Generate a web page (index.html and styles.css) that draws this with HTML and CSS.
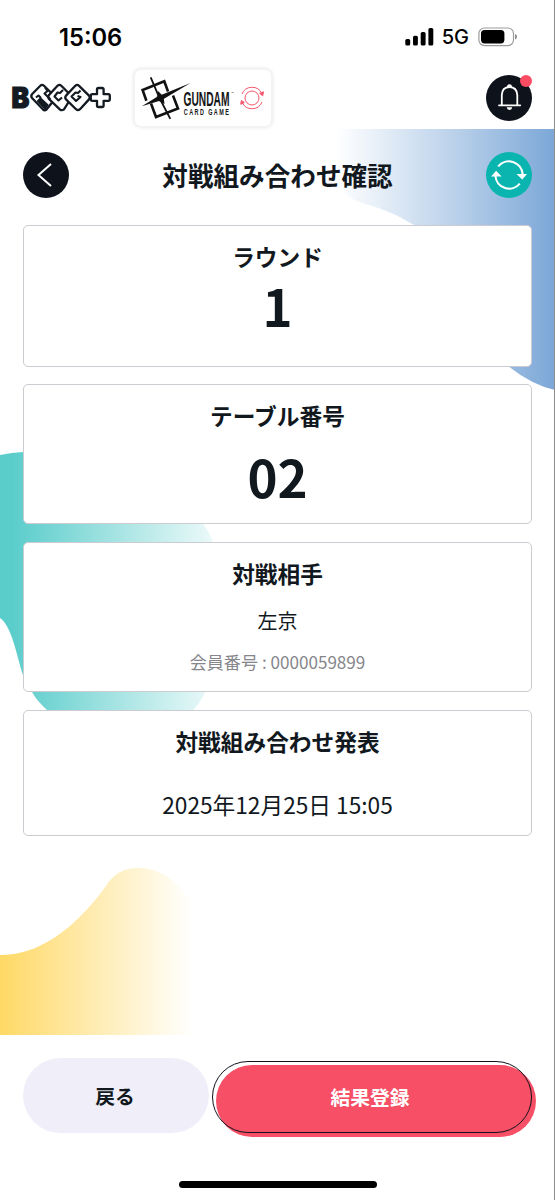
FILE: index.html
```html
<!DOCTYPE html>
<html lang="ja">
<head>
<meta charset="UTF-8" />
<meta name="viewport" content="width=device-width, initial-scale=1" />
<title>対戦組み合わせ確認</title>
<link rel="stylesheet" href="styles.css">
</head>
<body>

<div class="status-bar">
  <span class="time">15:06</span>
  <div class="status-icons">
    <svg class="signal" width="29" height="18" viewBox="0 0 29 18">
      <rect x="0.3" y="11" width="4.9" height="6.6" rx="1.6" />
      <rect x="8" y="7.7" width="4.9" height="9.9" rx="1.6" />
      <rect x="15.7" y="4" width="4.9" height="13.6" rx="1.6" />
      <rect x="23.4" y="0" width="4.9" height="17.6" rx="1.6" />
    </svg>
    <span class="network">5G</span>
    <svg class="battery" width="40" height="20" viewBox="0 0 40 20">
      <rect x="0.9" y="1" width="34.6" height="17.6" rx="5.5" fill="none" stroke="#9b9b9b" stroke-width="1.2" />
      <rect x="3" y="3" width="23.4" height="13.4" rx="3.6" />
      <path d="M37 7 Q39 7.8 39 9.8 Q39 11.8 37 12.6 Z" fill="#8a8a8a" />
    </svg>
  </div>
</div>

<header class="header">
  <svg class="brand-logo" width="104" height="38" viewBox="8 79 104 38">
    <text x="11.4" y="108" font-size="28.5" textLength="17.8" lengthAdjust="spacingAndGlyphs" class="brand-b">B</text>
    <g fill="#fff" stroke="#141a22" stroke-width="2.3" stroke-linejoin="round">
      <path d="M40.3 85.8 Q42 84 44 85.8 L56 97.5 L46.5 109.5 Q44.6 111 42.8 109.3 L32 98 Q30.5 95.8 32.2 94 Z" />
      <path d="M57.5 85.8 Q59.4 84 61.3 85.8 L72 96.5 L64 109.3 Q61.7 111 59.8 109.3 L49 99 Q47.5 97 49 95 Z" />
      <path d="M75.3 85.8 Q77.2 84 79.1 85.8 L89 95.6 Q90.5 97.5 89 99.4 L80 109.2 Q78 111 76 109.2 L66 99.4 Q64.5 97.5 66 95.6 Z" />
      <path d="M98.5 88 H102.1 Q103.6 88 103.6 89.5 V94.2 H108.3 Q109.8 94.2 109.8 95.7 V99.3 Q109.8 100.8 108.3 100.8 H103.6 V105.5 Q103.6 107 102.1 107 H98.5 Q97 107 97 105.5 V100.8 H92.3 Q90.8 100.8 90.8 99.3 V95.7 Q90.8 94.2 92.3 94.2 H97 V89.5 Q97 88 98.5 88 Z" />
    </g>
    <g fill="none" stroke="#141a22" stroke-width="2.1" stroke-linejoin="round">
      <path d="M38 101 L40.5 98.5 L47.5 105 L45 108.5 Z" fill="#141a22" />
      <path d="M36 97.5 L38.5 95.5 L41 98" />
      <path d="M45 87.5 L47.5 91 L44.5 93.5 L50.5 99.5" />
      <path d="M63 90 L60 93 L57.5 92.5 L54.5 96.5 L58.5 100.5 L62 97.5" />
      <path d="M80.5 90.5 L78 93 L75.5 92.5 L71.5 96.5 L76 101 L80.5 97 L77.5 96" />
    </g>
  </svg>

  <div class="game-card">
    <svg width="136" height="56" viewBox="135 70 136 56">
      <g fill="none" stroke="#111" stroke-width="2.6">
        <path d="M146.4 100.8 L142.6 90 L164.3 81.3 L168 91.5" />
        <path d="M151 103.5 L156 117 L178 108.5 L173 95.5" />
        <path d="M150.7 77.3 L159.5 98 L170.3 118.8" stroke-width="1.8" />
      </g>
      <path d="M141.8 106.3 L158 96.2 L190.5 83 L161.5 100.2 Z" fill="#111" />
      <path d="M158 91 L163.5 96.5 L164.5 104 L157 100 Z" fill="#111" />
      <text class="gundam" x="183.5" y="105.9" font-size="19.5" textLength="46" lengthAdjust="spacingAndGlyphs">GUNDAM</text>
      <text class="card-game" transform="translate(183.8 114.9) scale(0.62 1)">CARD GAME</text>
      <text class="tm" x="231" y="93.6">™</text>
      <g fill="none" stroke="#f4566c" stroke-width="1">
        <circle cx="252" cy="98" r="7" />
        <path d="M242 94 A10.8 10.8 0 0 1 261.8 93.5" />
        <path d="M262 102 A10.8 10.8 0 0 1 242.2 102.5" />
        <path d="M259.7 93.5 L263.5 91.8 L262.7 95.8 Z M244.3 102.5 L240.7 104.3 L241.4 100.4 Z" fill="#f4566c" />
      </g>
    </svg>
  </div>

  <button class="round-button bell-button" aria-label="お知らせ">
    <svg width="46" height="46" viewBox="0 0 46 46">
      <g fill="none" stroke="#fff" stroke-width="1.8" stroke-linejoin="round">
        <path d="M13 30.3 H34.2" stroke-linecap="round" />
        <path d="M15.8 30 V20 Q16.2 12.2 23.5 12 Q30.8 12.2 31.3 20 V30" />
      </g>
      <path d="M20.8 12.5 Q21 9.3 23.5 9.2 Q26 9.3 26.2 12.5 Z M20.7 32.2 H26.2 Q26 34.8 23.5 34.9 Q21 34.8 20.7 32.2 Z" fill="#fff" />
    </svg>
    <span class="badge"></span>
  </button>
</header>

<main class="main">
  <svg class="background" width="555" height="906" viewBox="0 129 555 906">
    <defs>
      <linearGradient id="blue" gradientUnits="userSpaceOnUse" x1="336" y1="0" x2="555" y2="0">
        <stop offset="0" stop-color="#7ba7d7" stop-opacity="0" />
        <stop offset="0.5" stop-color="#7ba7d7" stop-opacity="0.48" />
        <stop offset="1" stop-color="#7ba7d7" />
      </linearGradient>
      <linearGradient id="teal" gradientUnits="userSpaceOnUse" x1="12" y1="0" x2="222" y2="0">
        <stop offset="0" stop-color="#5acdcb" />
        <stop offset="1" stop-color="#5acdcb" stop-opacity="0.08" />
      </linearGradient>
      <linearGradient id="yellow" gradientUnits="userSpaceOnUse" x1="0" y1="0" x2="196" y2="0">
        <stop offset="0" stop-color="#ffd966" />
        <stop offset="0.9" stop-color="#ffd966" stop-opacity="0.08" />
        <stop offset="1" stop-color="#ffd966" stop-opacity="0" />
      </linearGradient>
    </defs>
    <path d="M336 129 H555 V390 Q532 385 508 366 C480 320 450 240 412 224 C392 212 380 208 362 203 Q344 197 336 184 Z" fill="url(#blue)" />
    <path d="M0 455 Q12 452.5 23 452 C100 450 190 490 203 524 Q209 531 213 542 C225 600 222 660 205 692 Q201 702 193 710 H47 Q37 701 32 692 Q27 685 23 675 C17 657 12 626 0 618 Z" fill="url(#teal)" />
    <path d="M0 955 C45 956 83 918 106 886 C118 867 134 868 141 868 C170 869 190 896 196 915 V1035 H0 Z" fill="url(#yellow)" />
  </svg>

  <div class="title-row">
    <button class="round-button" aria-label="前へ">
      <svg width="46" height="46" viewBox="0 0 46 46">
        <path d="M28 12 L15.5 23 L28 34" fill="none" stroke="#fff" stroke-width="2" />
      </svg>
    </button>
    <h1 class="page-title">対戦組み合わせ確認</h1>
    <button class="round-button reload-button" aria-label="更新">
      <svg width="46" height="46" viewBox="0 0 46 46">
        <g fill="none" stroke="#fff" stroke-width="2.1">
          <path d="M12.2 14.4 A13.8 13.8 0 0 1 36.6 22" />
          <path d="M33.8 31.6 A13.8 13.8 0 0 1 9.4 24" />
        </g>
        <path d="M30.5 22 H41 L36.2 27.5 Z M5.1 24.6 H15.6 L10.1 18.8 Z" fill="#fff" />
      </svg>
    </button>
  </div>

  <section class="card round-card">
    <h2>ラウンド</h2>
    <p class="number">1</p>
  </section>

  <section class="card table-card">
    <h2>テーブル番号</h2>
    <p class="number">02</p>
  </section>

  <section class="card opponent-card">
    <h2>対戦相手</h2>
    <p class="player">左京</p>
    <p class="member">会員番号 : 0000059899</p>
  </section>

  <section class="card date-card">
    <h2>対戦組み合わせ発表</h2>
    <p class="date">2025年12月25日 15:05</p>
  </section>
</main>

<footer class="footer">
  <div class="buttons">
    <button class="back">戻る</button>
    <button class="submit">結果登録</button>
  </div>
  <div class="home-bar"></div>
</footer>

</body>
</html>
```
FILE: styles.css
```css
* {
  box-sizing: border-box;
}
body {
  font-family: "Noto Sans CJK JP", "Noto Sans", sans-serif;
  margin: 0;
  height: 1200px;
  display: flex;
  flex-direction: column;
  background: #fff;
  color: #11181e;
  box-shadow: inset -1px 0 #8c8c8c;
  overflow: hidden;
}
h1, h2, p {
  margin: 0;
}
button {
  font-family: inherit;
  border: none;
  padding: 0;
  color: inherit;
  cursor: pointer;
}
svg {
  display: block;
  overflow: visible;
}

/* status bar */
.status-bar {
  height: 68px;
  padding: 6px 37px 0 59px;
  display: flex;
  align-items: center;
  justify-content: space-between;
  font-family: Inter, sans-serif;
  color: #000;
}
.time {
  font-size: 23.7px;
  font-weight: 600;
}
.status-icons {
  display: flex;
  align-items: center;
}
.network {
  font-size: 20px;
  font-weight: 500;
  margin: 0 9px 0 8px;
}

/* header */
.header {
  height: 61px;
  padding: 0 23px 0 8px;
  display: flex;
  align-items: flex-start;
}
.brand-logo {
  margin-top: 11px;
}
.brand-b {
  font-family: Inter, sans-serif;
  font-weight: 900;
  fill: #141a22;
  stroke: #141a22;
  stroke-width: 1.2px;
}
.game-card {
  width: 138px;
  height: 58px;
  margin: 1px auto 0 22px;
  border: 1px solid #f3f3f3;
  border-radius: 7px;
  background: #fff;
  box-shadow: 0 0 4px rgba(0, 0, 0, 0.13);
}
.gundam,
.card-game {
  font-family: "Liberation Sans", sans-serif;
  font-weight: bold;
  fill: #151515;
}
.card-game {
  font-size: 8.8px;
  letter-spacing: 2.3px;
}
.tm {
  font-family: "Liberation Sans", sans-serif;
  font-size: 3px;
}
.round-button {
  width: 46px;
  height: 46px;
  flex: none;
  border-radius: 50%;
  background: #0e121b;
}
.bell-button {
  position: relative;
  margin-top: 7px;
}
.badge {
  position: absolute;
  top: 0;
  right: 0;
  width: 12px;
  height: 12px;
  border-radius: 50%;
  background: #fb4c64;
}

/* content */
.main {
  position: relative;
  height: 906px;
  padding: 23px 23px 0;
}
.background {
  position: absolute;
  top: 0;
  left: 0;
  z-index: -1;
}
.title-row {
  display: flex;
  align-items: center;
  justify-content: space-between;
  margin-bottom: 27px;
}
.page-title {
  font-size: 25.6px;
  line-height: 46px;
}
.reload-button {
  background: #0ab5b0;
}
.card {
  border: 1.5px solid #cbcbd1;
  border-radius: 5px;
  background: #fff;
  text-align: center;
  margin-bottom: 18px;
}
.card h2 {
  font-size: 22.7px;
  line-height: 32px;
}
.number {
  font-size: 51px;
  line-height: 60px;
  font-weight: bold;
}
.round-card {
  height: 142px;
  padding-top: 15px;
  margin-bottom: 17px;
}
.round-card .number {
  margin-top: 2px;
}
.table-card {
  height: 140px;
  padding-top: 15px;
}
.table-card .number {
  margin-top: 14px;
}
.opponent-card {
  height: 150px;
  padding-top: 15px;
}
.player {
  font-size: 20px;
  line-height: 30px;
  margin-top: 16px;
}
.member {
  font-size: 17.1px;
  line-height: 26px;
  margin-top: 13px;
  color: #86868b;
}
.date-card {
  height: 126px;
  padding-top: 15px;
}
.date {
  font-size: 22.7px;
  line-height: 34px;
  margin-top: 30px;
}

/* footer */
.footer {
  padding: 23px 23px 0;
}
.buttons {
  display: flex;
  gap: 3px;
}
.buttons button {
  font-size: 19.8px;
  font-weight: bold;
}
.back {
  width: 186px;
  height: 75px;
  border-radius: 38px;
  background: #f0eef8;
  padding-right: 2px;
}
/* the pink fill is shifted from the outline */
.submit {
  position: relative;
  width: 320px;
  height: 72px;
  margin-top: 3px;
  padding: 0 4px 2px 0;
  border-radius: 37px;
  background: none;
  color: #fff;
  flex: none;
}
.submit::before,
.submit::after {
  content: "";
  position: absolute;
  inset: 0;
  border-radius: 37px;
  z-index: -1;
}
.submit::before {
  background: #f64f66;
  transform: translate(4px, 4px);
}
.submit::after {
  border: 1.5px solid #11131c;
}
.home-bar {
  width: 198px;
  height: 7px;
  margin: 48px auto 0;
  border-radius: 4px;
  background: #000;
}
```
